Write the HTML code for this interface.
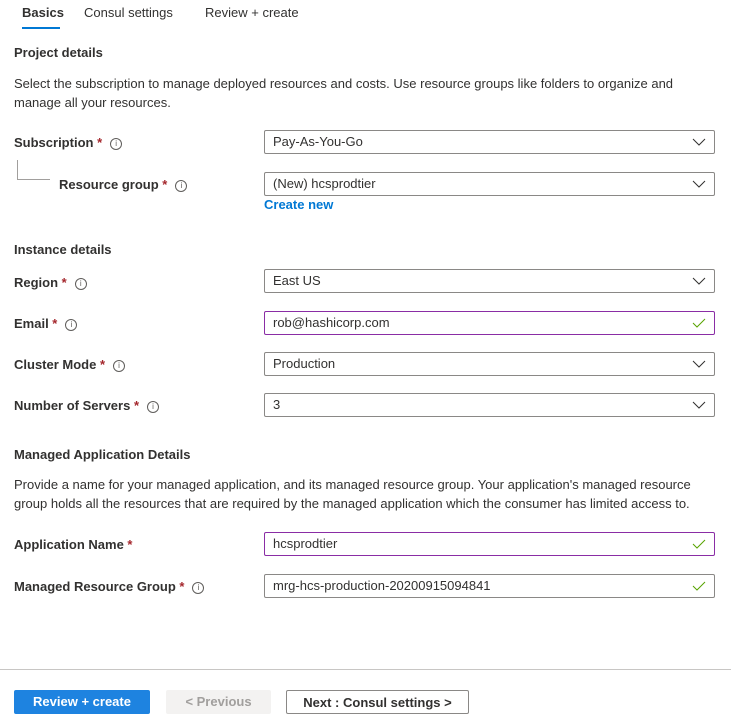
<!DOCTYPE html><html><head><style>
body{margin:0;width:731px;height:723px;background:#fff;font-family:"Liberation Sans",sans-serif;font-size:13px;color:#323130;position:relative;overflow:hidden}
.a{position:absolute;white-space:nowrap}
.b{font-weight:bold}
.s{color:#a4262c}
.i{display:inline-block;width:10px;height:10px;border:1px solid #605e5c;border-radius:50%;font-size:8px;line-height:10px;text-align:center;color:#605e5c;margin-left:8px;vertical-align:1px;font-weight:normal}
.f{position:absolute;left:264px;width:441px;height:22px;border:1px solid #8a8886;border-radius:2px;line-height:22px;padding-left:8px;box-sizing:content-box}
.f.p{border-color:#8a2da5}
.f svg{position:absolute;right:8px;top:6px}
.btn{position:absolute;top:690px;height:24px;line-height:24px;text-align:center;font-weight:bold;box-sizing:border-box;border-radius:2px}
</style></head><body>
<div class="a b" style="left:22px;top:5px">Basics</div>
<div style="position:absolute;left:22px;top:27px;width:38px;height:2px;background:#0078d4"></div>
<div class="a" style="left:84px;top:5px">Consul settings</div>
<div class="a" style="left:205px;top:5px">Review + create</div>
<div class="a b" style="left:14px;top:45px">Project details</div>
<div class="a" style="left:14px;top:74px;line-height:19px">Select the subscription to manage deployed resources and costs. Use resource groups like folders to organize and<br>manage all your resources.</div>
<div class="a b" style="left:14px;top:135px">Subscription <span class="s">*</span><span class="i">i</span></div>
<div style="position:absolute;left:17px;top:160px;width:32px;height:19px;border-left:1px solid #a19f9d;border-bottom:1px solid #a19f9d"></div>
<div class="a b" style="left:59px;top:177px">Resource group <span class="s">*</span><span class="i">i</span></div>
<div class="f" style="top:130px">Pay-As-You-Go<svg width="14" height="10"><path d="M1 2l6 6 6-6" fill="none" stroke="#323130"/></svg></div>
<div class="f" style="top:172px">(New) hcsprodtier<svg width="14" height="10"><path d="M1 2l6 6 6-6" fill="none" stroke="#323130"/></svg></div>
<div class="a b" style="left:264px;top:197px;color:#0078d4">Create new</div>
<div class="a b" style="left:14px;top:242px">Instance details</div>
<div class="a b" style="left:14px;top:275px">Region <span class="s">*</span><span class="i">i</span></div>
<div class="f" style="top:269px">East US<svg width="14" height="10"><path d="M1 2l6 6 6-6" fill="none" stroke="#323130"/></svg></div>
<div class="a b" style="left:14px;top:316px">Email <span class="s">*</span><span class="i">i</span></div>
<div class="f p" style="top:311px">rob@hashicorp.com<svg width="14" height="10"><path d="M1 5l4 4 8-8" fill="none" stroke="#57a300"/></svg></div>
<div class="a b" style="left:14px;top:357px">Cluster Mode <span class="s">*</span><span class="i">i</span></div>
<div class="f" style="top:352px">Production<svg width="14" height="10"><path d="M1 2l6 6 6-6" fill="none" stroke="#323130"/></svg></div>
<div class="a b" style="left:14px;top:398px">Number of Servers <span class="s">*</span><span class="i">i</span></div>
<div class="f" style="top:393px">3<svg width="14" height="10"><path d="M1 2l6 6 6-6" fill="none" stroke="#323130"/></svg></div>
<div class="a b" style="left:14px;top:447px">Managed Application Details</div>
<div class="a" style="left:14px;top:475px;line-height:19px">Provide a name for your managed application, and its managed resource group. Your application's managed resource<br>group holds all the resources that are required by the managed application which the consumer has limited access to.</div>
<div class="a b" style="left:14px;top:537px">Application Name <span class="s">*</span></div>
<div class="f p" style="top:532px">hcsprodtier<svg width="14" height="10"><path d="M1 5l4 4 8-8" fill="none" stroke="#57a300"/></svg></div>
<div class="a b" style="left:14px;top:579px">Managed Resource Group <span class="s">*</span><span class="i">i</span></div>
<div class="f" style="top:574px">mrg-hcs-production-20200915094841<svg width="14" height="10"><path d="M1 5l4 4 8-8" fill="none" stroke="#57a300"/></svg></div>
<div style="position:absolute;left:0;top:669px;width:731px;height:1px;background:#c8c6c4"></div>
<div class="btn" style="left:14px;width:136px;background:#1e83e0;color:#fff">Review + create</div>
<div class="btn" style="left:166px;width:105px;background:#f3f2f1;color:#a19f9d">&lt; Previous</div>
<div class="btn" style="left:286px;width:183px;border:1px solid #8a8886;color:#323130">Next : Consul settings &gt;</div>
</body></html>
